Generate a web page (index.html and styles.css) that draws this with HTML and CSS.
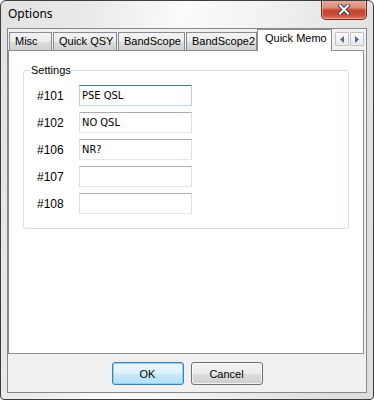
FILE: index.html
```html
<!DOCTYPE html>
<html lang="en">
<head>
  <meta charset="UTF-8">
  <meta name="viewport" content="width=device-width, initial-scale=1.0">
  <title>Options</title>
  <link rel="stylesheet" href="styles.css">
</head>
<body>
<div class="window">
  <div class="titlebar">
    <span class="title">Options</span>
    <button class="close" aria-label="Close">
      <svg width="12" height="11" viewBox="0 0 12 11">
        <path d="M2 1.5 L10 9.5 M10 1.5 L2 9.5" stroke="#3b3b3b" stroke-width="4" stroke-linecap="square"/>
        <path d="M2 1.5 L10 9.5 M10 1.5 L2 9.5" stroke="#ffffff" stroke-width="2" stroke-linecap="square"/>
      </svg>
    </button>
  </div>
  <div class="client">
    <div class="tabs">
      <div class="tab-strip">
        <span class="tab tab-misc">Misc</span>
        <span class="tab tab-qsy">Quick QSY</span>
        <span class="tab tab-scope">BandScope</span>
        <span class="tab tab-scope2">BandScope2</span>
        <span class="tab active">Quick Memo</span>
        <div class="spin">
          <span class="spin-btn">
            <svg width="4" height="7" viewBox="0 0 4 7"><path d="M4 0 L0 3.5 L4 7 Z" fill="#4d6a96"/></svg>
          </span>
          <span class="spin-btn">
            <svg width="4" height="7" viewBox="0 0 4 7"><path d="M0 0 L4 3.5 L0 7 Z" fill="#4d6a96"/></svg>
          </span>
        </div>
      </div>
      <div class="tab-panel">
        <fieldset class="group">
          <legend>Settings</legend>
          <div class="row">
            <label for="m101">#101</label>
            <input type="text" id="m101" class="field focused" value="PSE QSL">
          </div>
          <div class="row">
            <label for="m102">#102</label>
            <input type="text" id="m102" class="field" value="NO QSL">
          </div>
          <div class="row">
            <label for="m106">#106</label>
            <input type="text" id="m106" class="field" value="NR?">
          </div>
          <div class="row">
            <label for="m107">#107</label>
            <input type="text" id="m107" class="field" value="">
          </div>
          <div class="row">
            <label for="m108">#108</label>
            <input type="text" id="m108" class="field" value="">
          </div>
        </fieldset>
      </div>
    </div>
    <div class="buttons">
      <button class="btn btn-default">OK</button>
      <button class="btn">Cancel</button>
    </div>
  </div>
</div>
</body>
</html>
```

FILE: styles.css
```css
html, body {
  margin: 0;
  padding: 0;
  background: #ffffff;
}
body {
  font-family: "Liberation Sans", Arial, sans-serif;
  font-size: 11px;
  color: #000;
}
.window {
  box-sizing: border-box;
  width: 374px;
  height: 400px;
  border: 1px solid #3e3e3e;
  border-radius: 6px 6px 4px 4px;
  background: linear-gradient(100deg, #e2e2e2 0%, #ebebeb 22%, #fbfbfb 42%, #f3f3f3 58%, #e5e5e5 78%, #dcdcdc 100%);
  display: flex;
  flex-direction: column;
  overflow: hidden;
}
.titlebar {
  height: 27px;
  display: flex;
  align-items: flex-start;
  padding-left: 7px;
}
.title {
  font-family: "Noto Sans", "Liberation Sans", sans-serif;
  font-size: 12px;
  line-height: 16px;
  margin-top: 5px;
}
.close {
  margin-left: auto;
  margin-right: 6px;
  margin-top: -1px;
  width: 46px;
  height: 20px;
  padding: 0;
  border: 1px solid #6a2a22;
  border-top: none;
  border-radius: 0 0 5px 5px;
  background: linear-gradient(#eab0a2 0%, #dc8a7a 40%, #c6432f 55%, #c9503c 80%, #db7b62 100%);
  box-shadow: inset 0 0 0 1px rgba(255, 220, 210, 0.45);
  display: flex;
  align-items: center;
  justify-content: center;
}
.close svg {
  display: block;
}
.client {
  flex: 1;
  margin: 0 6px 6px;
  border: 1px solid #828790;
  background: #f0f0f0;
  display: flex;
  flex-direction: column;
  min-height: 0;
}
.tabs {
  flex: 1;
  margin-right: 2px;
  display: flex;
  flex-direction: column;
}
.tab-strip {
  height: 21px;
  display: flex;
  align-items: flex-end;
  padding-left: 1px;
}
.tab {
  box-sizing: border-box;
  height: 18px;
  margin-right: 1px;
  padding-left: 5px;
  border: 1px solid #898c95;
  border-bottom: none;
  background: linear-gradient(#f3f3f3 0%, #ebebeb 50%, #dddddd 51%, #cfcfcf 100%);
  line-height: 16px;
  white-space: nowrap;
  overflow: hidden;
}
.tab-misc { width: 43px; }
.tab-qsy { width: 64px; }
.tab-scope { width: 67px; }
.tab-scope2 { width: 71px; margin-right: 0; }
.tab.active {
  width: 75px;
  height: 22px;
  margin-bottom: -1px;
  padding-left: 7px;
  background: #ffffff;
  line-height: 17px;
  position: relative;
  z-index: 1;
}
.spin {
  align-self: flex-start;
  margin: 3px 0 0 auto;
  display: flex;
  gap: 1px;
}
.spin-btn {
  box-sizing: border-box;
  width: 14px;
  height: 14px;
  border: 1px solid #c3c3c3;
  border-radius: 1px;
  background: linear-gradient(#fbfbfb, #e9e9e9);
  display: flex;
  align-items: center;
  justify-content: center;
}
.spin-btn svg {
  display: block;
}
.tab-panel {
  flex: 1;
  border: 1px solid #898c95;
  background: #ffffff;
  padding: 13px 14px 0;
}
.group {
  margin: 0;
  padding: 8px 0 14px 13px;
  border: 1px solid #d5dfe5;
  border-radius: 3px;
  display: flex;
  flex-direction: column;
  gap: 6px;
}
.group legend {
  margin-left: -7px;
  padding: 0 1px;
  line-height: 13px;
}
.row {
  display: flex;
  align-items: center;
}
.row label {
  width: 42px;
  font-size: 12px;
}
.field {
  box-sizing: border-box;
  width: 113px;
  height: 21px;
  margin: 0;
  padding: 0 2px;
  border: 1px solid #dbdfe6;
  border-top-color: #abadb3;
  border-bottom-color: #e3e9ef;
  background: #ffffff;
  font-family: "DejaVu Sans Condensed", "Liberation Sans", sans-serif;
  font-size: 11px;
  color: #000;
  outline: none;
}
.field.focused {
  border-color: #b5cfe7;
  border-top-color: #3d7bad;
  border-bottom-color: #b7d9ed;
}
.buttons {
  display: flex;
  justify-content: center;
  gap: 7px;
  padding: 8px 0 7px;
}
.btn {
  box-sizing: border-box;
  width: 72px;
  height: 23px;
  padding: 0;
  border: 1px solid #707070;
  border-radius: 3px;
  background: linear-gradient(#f2f2f2 0%, #ebebeb 50%, #dddddd 51%, #cfcfcf 100%);
  box-shadow: inset 0 0 0 1px rgba(255, 255, 255, 0.7);
  font-family: "Liberation Sans", Arial, sans-serif;
  font-size: 11px;
  color: #000;
}
.btn-default {
  border-color: #3c7fb1;
  background: linear-gradient(#ecf7fd 0%, #dcf1fc 50%, #c7e9fa 51%, #b6e0f6 100%);
  box-shadow: inset 0 0 0 1px #8bd3f7;
}
```
